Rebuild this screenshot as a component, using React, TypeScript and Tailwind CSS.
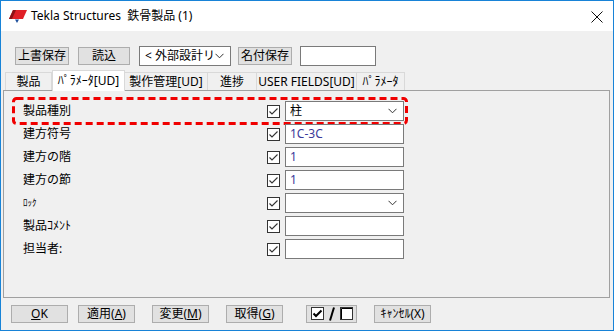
const FONT = "font-['Noto_Sans','Noto_Sans_CJK_JP',sans-serif]";

const Check = ({ bold = false }: { bold?: boolean }) => (
  <svg width="13" height="13" viewBox="0 0 13 13" className="block">
    <rect x="0.5" y="0.5" width="12" height="12" fill="#fff" stroke="#333" />
    <path
      d="M2.5 6.5 L5 9 L10.5 3.5"
      fill="none"
      stroke={bold ? "#000" : "#333"}
      strokeWidth={bold ? 2 : 1.1}
    />
  </svg>
);

const Chevron = () => (
  <svg width="9" height="6" viewBox="0 0 9 6" className="block">
    <path d="M0.5 0.8 L4.5 4.8 L8.5 0.8" fill="none" stroke="#333" strokeWidth="1" />
  </svg>
);

const Logo = () => (
  <svg width="20" height="16" viewBox="0 0 20 16" className="block">
    <polygon points="5,2 19,2 15,11 1,11" fill="#e01f26" />
    <polygon points="5,2 8,2 4,11 1,11" fill="#8c1216" />
    <polygon points="7,11.5 11,11.5 9,15" fill="#1d4f9c" />
  </svg>
);

// red dashed highlight round the first row
const Highlight = () => (
  <svg width="396" height="28" viewBox="0 0 396 28" className="absolute -left-[1px] -top-[4px] pointer-events-none">
    <rect
      x="1.5"
      y="1.5"
      width="393"
      height="25"
      rx="3"
      fill="none"
      stroke="#f00000"
      strokeWidth="3"
      strokeDasharray="7 4"
    />
  </svg>
);

type Row = { label: string; kind: "select" | "text"; value?: string; small?: boolean };

const ROWS: Row[] = [
  { label: "製品種別", kind: "select", value: "柱" },
  { label: "建方符号", kind: "text", value: "1C-3C" },
  { label: "建方の階", kind: "text", value: "1" },
  { label: "建方の節", kind: "text", value: "1" },
  { label: "ﾛｯｸ", kind: "select", small: true },
  { label: "製品ｺﾒﾝﾄ", kind: "text" },
  { label: "担当者:", kind: "text" },
];

const TABS = [
  { label: "製品", w: "w-[47px]" },
  { label: "ﾊﾟﾗﾒｰﾀ[UD]", w: "w-[73px]", active: true },
  { label: "製作管理[UD]", w: "w-[83px]" },
  { label: "進捗", w: "w-[49px]" },
  { label: "USER FIELDS[UD]", w: "w-[100px]" },
  { label: "ﾊﾟﾗﾒｰﾀ", w: "w-[48px]" },
];

const btn =
  "h-[18px] flex items-center justify-center border border-[#adadad] bg-[#e1e1e1] text-[12px] text-black";

export default function App() {
  return (
    <div
      className={`${FONT} w-[614px] h-[331px] border border-[#1883d7] bg-[#f0f0f0] flex flex-col text-[12px] text-black overflow-hidden`}
    >
      {/* title bar */}
      <div className="h-[30px] bg-white flex items-center pl-[7px] pr-[10px] shrink-0">
        <Logo />
        <span className="ml-[3px] text-[12px] whitespace-pre">Tekla Structures  鉄骨製品 (1)</span>
        <svg width="12" height="12" viewBox="0 0 12 12" className="ml-auto mt-[1px]">
          <path d="M0.5 0.5 L11.5 11.5 M11.5 0.5 L0.5 11.5" stroke="#111" strokeWidth="1" />
        </svg>
      </div>

      {/* toolbar */}
      <div className="flex items-center mt-[15px] pl-[14px] h-[19px] shrink-0">
        <div className={`${btn} w-[54px]`}>上書保存</div>
        <div className={`${btn} w-[52px] ml-[9px]`}>読込</div>
        <div className="ml-[9px] w-[92px] h-[20px] border border-[#7a7a7a] bg-white flex items-center pl-[5px] pr-[8px]">
          <span className="whitespace-nowrap text-[12px]">&lt; 外部設計リ</span>
          <span className="ml-auto">
            <Chevron />
          </span>
        </div>
        <div className={`${btn} w-[54px] ml-[7px]`}>名付保存</div>
        <div className="ml-[8px] w-[76px] h-[20px] border border-[#7a7a7a] bg-white" />
      </div>

      {/* tabs */}
      <div className="flex items-end mt-[5px] pl-[4px] h-[20px] shrink-0 relative z-10">
        {TABS.map((t) =>
          t.active ? (
            <div
              key={t.label}
              className={`${t.w} h-[21px] -mb-[1px] bg-white border border-b-0 border-[#d9d9d9] flex items-center justify-center whitespace-nowrap`}
            >
              {t.label}
            </div>
          ) : (
            <div
              key={t.label}
              className={`${t.w} h-[18px] border border-l-0 first:border-l border-b-0 border-[#d9d9d9] flex items-center justify-center whitespace-nowrap`}
            >
              {t.label}
            </div>
          )
        )}
      </div>

      {/* panel */}
      <div className="mx-[2px] mr-[3px] h-[208px] border border-[#a0a0a0] bg-[#f0f0f0] shrink-0 pt-[10px] pl-[9px] relative">
        <div className="flex flex-col gap-[3px]">
          {ROWS.map((r, i) => (
            <div key={r.label} className="flex items-center h-[20px] relative">
              {i === 0 && <Highlight />}
              <span
                className={`w-[254px] pl-[10px] ${r.small ? "text-[9px]" : "text-[12px]"} whitespace-nowrap`}
              >
                {r.label}
              </span>
              <Check />
              <div className="ml-[5px] w-[119px] h-[20px] border border-[#7a7a7a] bg-white flex items-center pl-[4px] pr-[6px]">
                <span className={`text-[12px] ${r.kind === "text" ? "text-[#3a3a9a]" : "text-black"}`}>
                  {r.value}
                </span>
                {r.kind === "select" && (
                  <span className="ml-auto">
                    <Chevron />
                  </span>
                )}
              </div>
            </div>
          ))}
        </div>
      </div>

      {/* bottom buttons */}
      <div className="flex items-center mt-[6px] pl-[10px] h-[19px] shrink-0">
        <div className={`${btn} w-[57px]`}>
          <span className="underline">O</span>K
        </div>
        <div className={`${btn} w-[57px] ml-[10px]`}>
          適用(<span className="underline">A</span>)
        </div>
        <div className={`${btn} w-[57px] ml-[17px]`}>
          変更(<span className="underline">M</span>)
        </div>
        <div className={`${btn} w-[57px] ml-[17px]`}>
          取得(<span className="underline">G</span>)
        </div>
        <div className={`${btn} w-[51px] ml-[23px] gap-[5px]`}>
          <Check bold />
          <svg width="6" height="14" viewBox="0 0 6 14">
            <path d="M5 0.5 L1 13.5" stroke="#000" strokeWidth="2" />
          </svg>
          <svg width="13" height="13" viewBox="0 0 13 13">
            <rect x="0.5" y="0.5" width="12" height="12" fill="#fff" stroke="#333" />
            <path d="M1.5 12 V1.5 H12" fill="none" stroke="#000" strokeWidth="1" />
          </svg>
        </div>
        <div className={`${btn} w-[57px] ml-[17px] text-[9px]`}>ｷｬﾝｾﾙ(X)</div>
      </div>
    </div>
  );
}
